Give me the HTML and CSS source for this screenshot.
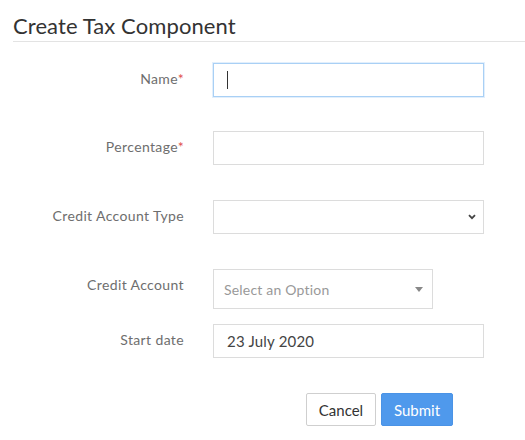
FILE: index.html
```html
<!DOCTYPE html>
<html>
<head>
<meta charset="utf-8">
<link rel="stylesheet" href="styles.css">
</head>
<body>
<div class="page">
  <h1 class="title">Create Tax Component</h1>
  <form class="form">
    <div class="row row-first">
      <label class="label">Name<span class="req">*</span></label>
      <div class="control focus"><span class="caret"></span></div>
    </div>
    <div class="row row-gap">
      <label class="label">Percentage<span class="req">*</span></label>
      <div class="control"></div>
    </div>
    <div class="row row-gap">
      <label class="label">Credit Account Type</label>
      <div class="control select">
        <svg class="chev" width="8" height="6" viewBox="0 0 8 6"><path d="M1 1.2 L4 4.2 L7 1.2" fill="none" stroke="#444" stroke-width="1.8"/></svg>
      </div>
    </div>
    <div class="row row-small">
      <label class="label">Credit Account</label>
      <div class="select2"><span class="ph">Select an Option</span><span class="tri"></span></div>
    </div>
    <div class="row row-gap">
      <label class="label">Start date</label>
      <div class="control"><span class="val">23 July 2020</span></div>
    </div>
    <div class="row">
      <span></span>
      <div class="actions">
        <button type="button" class="btn btn-cancel">Cancel</button>
        <button type="button" class="btn btn-submit">Submit</button>
      </div>
    </div>
  </form>
</div>
</body>
</html>
```

FILE: styles.css
```css
html, body {
  margin: 0;
  padding: 0;
  background: #fff;
}
body {
  font-family: "Lato", "Open Sans", sans-serif;
  font-size: 14px;
  color: #555;
}
.page {
  padding: 12px 0 0 13px;
}
.title {
  margin: 0;
  font-size: 22px;
  font-weight: 400;
  color: #333;
  line-height: 28px;
  padding-bottom: 1px;
  letter-spacing: 0.1px;
  border-bottom: 1px solid #e3e3e3;
}
.form {
  padding-top: 21px;
}
.row {
  display: grid;
  grid-template-columns: 171px 271px;
  column-gap: 29px;
  align-items: start;
}
.row-first { margin-bottom: 34px; }
.row-gap { margin-bottom: 35px; }
.row-small { margin-bottom: 15px; }
.label {
  text-align: right;
  color: #6e6e6e;
  line-height: 20px;
  padding-top: 6px;
  letter-spacing: 0.37px;
}
.req { color: #e0504f; }
.control {
  box-sizing: border-box;
  height: 34px;
  border: 1px solid #dcdcdc;
  position: relative;
  display: flex;
  align-items: center;
  padding-left: 13px;
}
.control.focus {
  border-color: #a9d0f5;
  box-shadow: 0 0 0 1px #e2effc;
}
.caret {
  display: block;
  width: 1px;
  height: 18px;
  background: #333;
}
.select {
  justify-content: flex-end;
  padding-right: 7px;
}
.chev { display: block; }
.select2 {
  box-sizing: border-box;
  width: 220px;
  height: 40px;
  border: 1px solid #dcdcdc;
  display: flex;
  align-items: center;
  justify-content: space-between;
  padding: 0 9px 0 10px;
}
.ph {
  color: #999;
  font-size: 14px;
  letter-spacing: 0.2px;
}
.tri {
  width: 0;
  height: 0;
  border-left: 4px solid transparent;
  border-right: 4px solid transparent;
  border-top: 5px solid #888;
}
.val {
  color: #444;
  font-size: 15px;
  letter-spacing: 0.2px;
}
.actions {
  display: flex;
  gap: 5px;
  padding-left: 93px;
}
.btn {
  font-family: inherit;
  font-size: 15px;
  height: 33px;
  border-radius: 2px;
  padding: 0 10px;
  cursor: pointer;
}
.btn-cancel {
  background: #fff;
  border: 1px solid #cfcfcf;
  color: #333;
  width: 70px;
}
.btn-submit {
  background: #4f99ec;
  border: 1px solid #4a93e6;
  color: #fff;
  width: 72px;
}
```
